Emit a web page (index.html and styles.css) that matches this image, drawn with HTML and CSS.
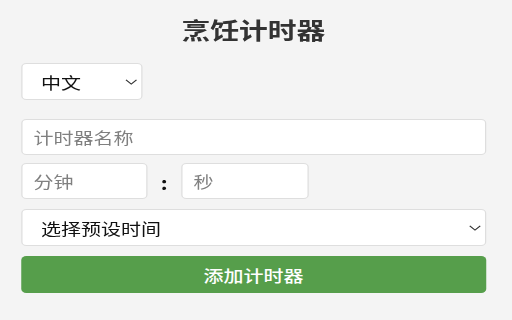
FILE: index.html
```html
<!DOCTYPE html>
<html lang="zh-CN">
<head>
<meta charset="utf-8">
<title>烹饪计时器</title>
<link rel="stylesheet" href="styles.css">
</head>
<body>
<div class="page">
  <h1 class="title">烹饪计时器</h1>
  <div class="select-wrap lang">
    <select class="select">
      <option>中文</option>
      <option>English</option>
    </select>
    <svg class="chevron" width="10" height="6" viewBox="0 0 10 6"><polyline points="0.8,0.8 5,5 9.2,0.8" fill="none" stroke="#333" stroke-width="1"/></svg>
  </div>
  <input class="field name" type="text" placeholder="计时器名称">
  <div class="time-row">
    <input class="field small" type="text" placeholder="分钟">
    <span class="colon">:</span>
    <input class="field small sec" type="text" placeholder="秒">
  </div>
  <div class="select-wrap preset">
    <select class="select">
      <option>选择预设时间</option>
    </select>
    <svg class="chevron" width="10" height="6" viewBox="0 0 10 6"><polyline points="0.8,0.8 5,5 9.2,0.8" fill="none" stroke="#333" stroke-width="1"/></svg>
  </div>
  <button class="add">添加计时器</button>
</div>
</body>
</html>
```

FILE: styles.css
```css
html, body {
  margin: 0;
  padding: 0;
  background: #f4f4f4;
  overflow: hidden;
}
.page {
  width: 409.6px;
  height: 320px;
  box-sizing: border-box;
  padding: 14px 20.8px 0 16.8px;
  transform: scaleX(1.25);
  transform-origin: 0 0;
  font-family: "Noto Sans CJK SC", "Noto Sans", sans-serif;
  display: flex;
  flex-direction: column;
  align-items: flex-start;
}
.title {
  margin: 0 0 19px;
  width: 100%;
  text-align: center;
  font-size: 23px;
  line-height: 30px;
  font-weight: 700;
  color: #333;
}
.select-wrap {
  position: relative;
}
.select-wrap.lang {
  width: 97px;
  margin-bottom: 19px;
}
.select-wrap.preset {
  width: 372px;
  margin-bottom: 10px;
}
.select {
  appearance: none;
  -webkit-appearance: none;
  display: block;
  width: 100%;
  height: 37px;
  box-sizing: border-box;
  margin: 0;
  padding: 0 15px;
  border: 1px solid #dedede;
  border-radius: 4px;
  background: #fff;
  font-family: inherit;
  font-size: 16px;
  color: #111;
  outline: none;
}
.chevron {
  position: absolute;
  right: 4px;
  top: 50%;
  margin-top: -3px;
  pointer-events: none;
}
.field {
  display: block;
  height: 36px;
  box-sizing: border-box;
  margin: 0;
  padding: 0 9px;
  border: 1px solid #dedede;
  border-radius: 4px;
  background: #fff;
  font-family: inherit;
  font-size: 16px;
  color: #111;
  outline: none;
}
.field::placeholder {
  color: #808080;
}
.field.name {
  width: 372px;
  margin-bottom: 8px;
}
.time-row {
  display: flex;
  align-items: center;
  height: 36px;
  margin-bottom: 10px;
}
.field.small {
  width: 101px;
}
.field.sec {
  width: 102px;
}
.colon {
  display: block;
  width: 27px;
  height: 36px;
  text-align: center;
  font-size: 17px;
  font-weight: 700;
  color: #111;
  line-height: 40px;
}
.add {
  width: 372px;
  height: 37px;
  margin: 0;
  padding: 0;
  border: none;
  border-radius: 4px;
  background: #569e4b;
  color: #fff;
  font-family: inherit;
  font-size: 16px;
  font-weight: 500;
  cursor: pointer;
}
```
